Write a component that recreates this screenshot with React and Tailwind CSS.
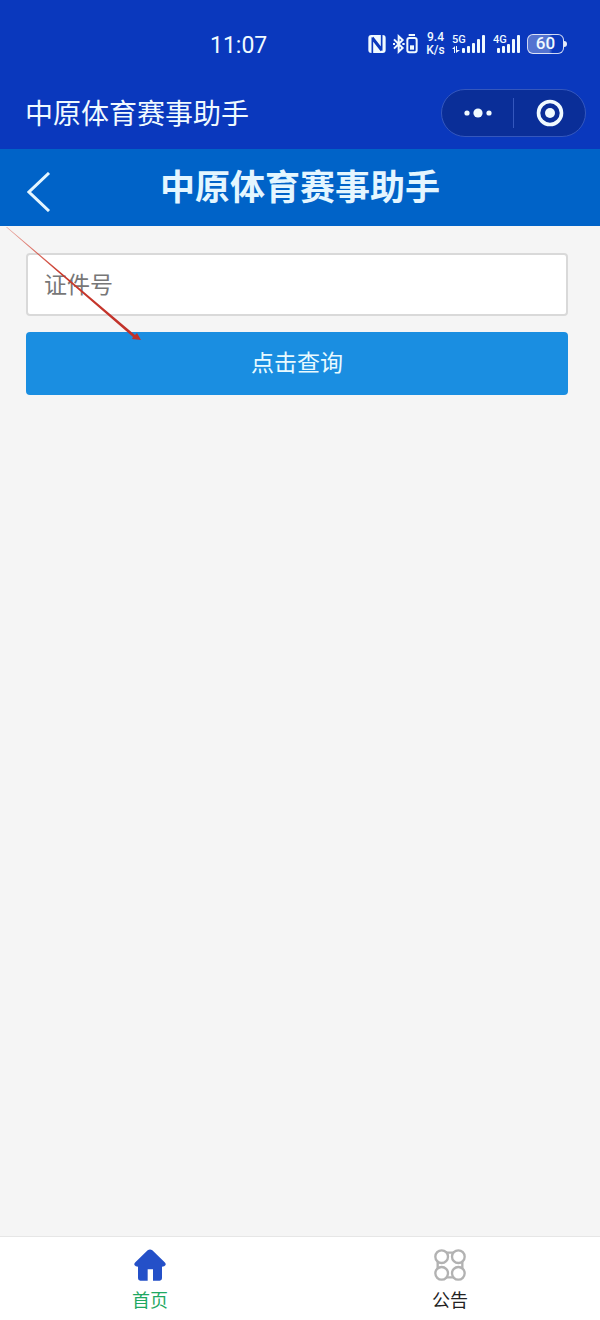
import React, { useState } from 'react';

const NfcIcon = () => (
  <svg viewBox="0 0 54 60" className="w-[18px] h-5">
    <rect x="1" y="3" width="52" height="54" rx="9" fill="currentColor" />
    <path d="M13 58 V16 L40 50 M14 10 L41 44 V2" fill="none" stroke="#0a38bd" strokeWidth="5" />
  </svg>
);

const BluetoothIcon = () => (
  <svg viewBox="0 0 78 60" className="w-[26px] h-5" fill="none" stroke="currentColor" strokeWidth="6">
    <path d="M3 16 L29 42 L17 53 V7 L29 18 L3 44" />
    <path d="M0 30 H6 M28 30 H35" />
    <path d="M47 3 H66" />
    <rect x="43" y="12" width="28" height="43" rx="6" />
    <rect x="51" y="34" width="12" height="13" fill="currentColor" stroke="none" />
  </svg>
);

const Signal5G = () => (
  <svg viewBox="0 0 34 20" className="w-[34px] h-5" fill="currentColor">
    <text x="0" y="9" fontSize="11" fontWeight="500">5G</text>
    <path d="M2 19 V15 H0 L3 12 V19 Z M5 12 V16 H8 L4 19 V12 Z" />
    <rect x="10" y="14" width="3" height="5" rx="1" />
    <rect x="15" y="12" width="3" height="7" rx="1" />
    <rect x="20" y="9" width="3" height="10" rx="1" />
    <rect x="25" y="5" width="3" height="14" rx="1" />
    <rect x="30" y="1" width="3" height="18" rx="1" />
  </svg>
);

const Signal4G = () => (
  <svg viewBox="0 0 27 20" className="w-[27px] h-5" fill="currentColor">
    <text x="0" y="9" fontSize="11" fontWeight="500">4G</text>
    <rect x="4" y="14" width="3" height="5" rx="1" />
    <rect x="9" y="12" width="3" height="7" rx="1" />
    <rect x="14" y="10" width="3" height="9" rx="1" />
    <rect x="19" y="5" width="3" height="14" rx="1" />
    <rect x="24" y="1" width="3" height="18" rx="1" />
  </svg>
);

const HomeIcon = () => (
  <svg viewBox="0 0 96 96" className="w-8 h-8" fill="#2450c8">
    <path d="M41 4 Q48 -1 55 4 L92 40 Q97 45 94 49 Q92 53 84 53 V88 Q84 95 77 95 H57 V61 H41 V95 H19 Q12 95 12 88 V53 Q4 53 2 49 Q-1 45 4 40 Z" />
  </svg>
);

const NoticeIcon = () => (
  <svg viewBox="0 0 96 96" className="w-8 h-8" fill="none" stroke="#b2b2b2" strokeWidth="7">
    <circle cx="23" cy="23" r="19" />
    <circle cx="73" cy="23" r="19" />
    <circle cx="23" cy="73" r="19" />
    <circle cx="73" cy="73" r="19" />
    <path d="M37 11 H59 M37 85 H59 M11 37 V59 M85 37 V59" />
  </svg>
);

const StatusBar = () => (
  <div className="h-[88px] flex items-center justify-between pl-[35%] pr-[33px] font-['Roboto',sans-serif]">
    <span className="text-[23px] pt-1">11:07</span>
    <div className="flex items-center gap-[7px]">
      <NfcIcon />
      <BluetoothIcon />
      <div className="w-[19px] flex flex-col items-center text-[12px] leading-[13px] font-medium">
        <span>9.4</span>
        <span>K/s</span>
      </div>
      <Signal5G />
      <Signal4G />
      <div className="flex items-center">
        <span className="w-[37px] h-5 flex items-center justify-center rounded-[6px] border border-white/80 bg-linear-to-r from-white/30 from-60% to-transparent to-70% text-[17px] font-medium">
          60
        </span>
        <span className="w-[3px] h-[6px] rounded-r-sm bg-white/90" />
      </div>
    </div>
  </div>
);

const App = () => {
  const [documento, setDocumento] = useState('');
  const [tab, setTab] = useState('home');

  return (
    <div className="min-h-screen flex flex-col bg-[#f5f5f5] font-['Noto_Sans_CJK_SC',sans-serif]">
      <div className="bg-[#0a38bd] text-[#f0faff]">
        <StatusBar />
        <div className="flex items-center justify-between pt-px pb-3 pl-[25px] pr-[14px]">
          <span className="text-[28px] leading-[44px] pb-[2px]">中原体育赛事助手</span>
          <div className="w-[145px] h-12 flex items-center rounded-full border border-[#3457bd] bg-[#0a2e98]">
            <button type="button" aria-label="更多" className="flex-1 flex justify-center">
              <svg viewBox="0 0 30 10" className="w-[30px] h-[10px]" fill="currentColor">
                <circle cx="4" cy="5" r="2.6" />
                <circle cx="15" cy="5" r="4.6" />
                <circle cx="26" cy="5" r="2.6" />
              </svg>
            </button>
            <span className="w-px h-[30px] bg-[#3457bd]" />
            <button type="button" aria-label="关闭" className="flex-1 flex justify-center">
              <svg viewBox="0 0 28 28" className="w-7 h-7" fill="none" stroke="currentColor">
                <circle cx="14" cy="14" r="11.5" strokeWidth="3.6" />
                <circle cx="14" cy="14" r="5" fill="currentColor" stroke="none" />
              </svg>
            </button>
          </div>
        </div>
      </div>

      <header className="h-[77px] grid grid-cols-[1fr_auto_1fr] items-center bg-[#0063c8] text-[#e4f6ff]">
        <button type="button" aria-label="返回" className="justify-self-start pl-[27px] pt-2">
          <svg viewBox="0 0 24 40" className="w-6 h-10" fill="none" stroke="currentColor" strokeWidth="3">
            <path d="M22 1 L2 20 L22 39" />
          </svg>
        </button>
        <h1 className="text-[35px] leading-[48px] pb-[6px] font-bold">中原体育赛事助手</h1>
      </header>

      <main className="relative flex-1 flex flex-col gap-4 pt-[27px] pl-[26px] pr-8">
        <input
          type="text"
          aria-label="证件号"
          value={documento}
          onChange={(e) => setDocumento(e.target.value)}
          placeholder="证件号"
          className="w-full h-[63px] px-4 pb-1 rounded-[4px] border-2 border-[#d9d9d9] bg-white text-[23px] text-gray-800 placeholder:text-[#777777]"
        />
        <button type="button" className="w-full h-[63px] pb-1 rounded-[4px] bg-[#1a8ee1] text-[23px] text-[#e8faff]">
          点击查询
        </button>

        <svg viewBox="0 0 150 120" className="absolute top-0 left-0 w-[150px] h-[120px] pointer-events-none">
          <defs>
            <linearGradient id="arrow" x1="0" y1="0" x2="1" y2="1">
              <stop offset="0" stopColor="#d8402f" stopOpacity="0.4" />
              <stop offset="0.4" stopColor="#c93a2c" />
              <stop offset="1" stopColor="#c0302a" />
            </linearGradient>
          </defs>
          <path d="M6 1 L7 1 L135 109 L137 107 L141 114 L132 113 L133 111 Z" fill="url(#arrow)" />
        </svg>
      </main>

      <nav className="flex border-t border-[#e6e6e6] bg-white text-[18px] leading-6">
        <button
          type="button"
          onClick={() => setTab('home')}
          className={`flex-1 flex flex-col items-center gap-[6px] pt-3 pb-[9px] ${tab === 'home' ? 'text-[#1fa862]' : 'text-[#222222]'}`}
        >
          <HomeIcon />
          <span>首页</span>
        </button>
        <button
          type="button"
          onClick={() => setTab('notice')}
          className={`flex-1 flex flex-col items-center gap-[6px] pt-3 pb-[9px] ${tab === 'notice' ? 'text-[#1fa862]' : 'text-[#222222]'}`}
        >
          <NoticeIcon />
          <span>公告</span>
        </button>
      </nav>
    </div>
  );
};

export default App;
